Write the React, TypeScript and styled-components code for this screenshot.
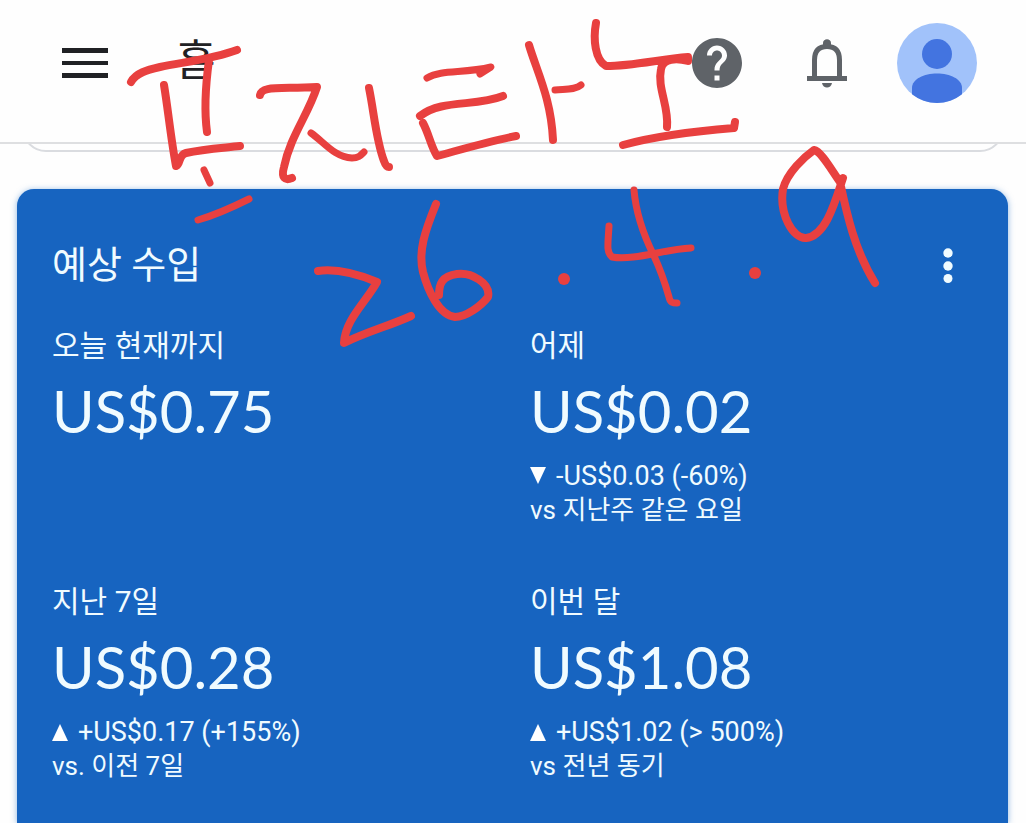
import React from 'react';
import styled, { createGlobalStyle } from 'styled-components';

const GlobalStyle = createGlobalStyle`
  * { box-sizing: border-box; }
  body {
    margin: 0;
    background: #fefefe;
    font-family: Roboto, "Noto Sans CJK KR", sans-serif;
    overflow-x: hidden;
  }
  h1, h2, h3, p { margin: 0; font-weight: 400; }
`;

const Page = styled.div`
  position: relative;
  min-height: 100vh;
  display: flex;
  flex-direction: column;
`;

const TopBar = styled.header`
  display: flex;
  align-items: center;
  padding: 0 34px 16px 30px;
  height: 144px;
  border-bottom: 2px solid #dedfe1;
`;

const IconButton = styled.button`
  display: flex;
  align-items: center;
  justify-content: center;
  width: 110px;
  height: 110px;
  padding: 0;
  border: 0;
  background: none;
  cursor: pointer;
`;

const PageTitle = styled.h1`
  flex: 1;
  padding: 0 0 4px 36px;
  font-size: 43px;
  line-height: 50px;
  color: #202124;
`;

const PanelTail = styled.div`
  display: flex;
  align-items: flex-end;
  height: 8px;
  margin: 0 22px;
  overflow: hidden;
`;

const PanelEdge = styled.div`
  flex: 1;
  height: 60px;
  border: 2px solid #dadce0;
  border-radius: 24px;
`;

const Card = styled.main`
  flex: 1;
  margin: 37px 18px 0 17px;
  padding: 51px 0 38px 35px;
  border-radius: 17px 17px 0 0;
  background: #1764c0;
  box-shadow: 0 1px 6px rgba(30, 110, 200, 0.5);
  color: #f0fbff;
`;

const CardHead = styled.div`
  display: flex;
  align-items: center;
  justify-content: space-between;
  height: 50px;
  margin-bottom: 36px;
  padding-right: 40px;
`;

const CardTitle = styled.h2`
  font-size: 38px;
  line-height: 50px;
`;

const MoreButton = styled(IconButton)`
  width: 40px;
  height: 50px;
`;

const Metrics = styled.div`
  display: grid;
  grid-template-columns: 1fr 1fr;
  row-gap: 55px;
`;

const Label = styled.h3`
  font-size: 30px;
  line-height: 40px;
`;

const Amount = styled.p`
  margin: 9px 0 12px;
  font-family: Lato, sans-serif;
  font-size: 58px;
  line-height: 72px;
`;

const Detail = styled.p`
  display: flex;
  align-items: center;
  gap: 10px;
  font-size: 26px;
  line-height: 34px;
`;

const Change = styled(Detail)`
  font-size: 27px;
`;

const Ink = styled.svg`
  position: absolute;
  top: 0;
  left: 0;
  pointer-events: none;
`;

type MetricData = {
  label: string;
  amount: string;
  trend?: 'up' | 'down';
  change?: string;
  versus?: string;
};

const metrics: MetricData[] = [
  { label: '오늘 현재까지', amount: 'US$0.75' },
  { label: '어제', amount: 'US$0.02', trend: 'down', change: '-US$0.03 (-60%)', versus: 'vs 지난주 같은 요일' },
  { label: '지난 7일', amount: 'US$0.28', trend: 'up', change: '+US$0.17 (+155%)', versus: 'vs. 이전 7일' },
  { label: '이번 달', amount: 'US$1.08', trend: 'up', change: '+US$1.02 (> 500%)', versus: 'vs 전년 동기' },
];

const Metric = ({ label, amount, trend, change, versus }: MetricData) => (
  <section>
    <Label>{label}</Label>
    <Amount>{amount}</Amount>
    {trend && (
      <Change>
        <svg width="16" height="18" viewBox="0 0 16 18" fill="#fff" aria-hidden="true">
          <path d={trend === 'up' ? 'M8 1 16 18H0Z' : 'M0 0H16L8 17Z'} />
        </svg>
        {change}
      </Change>
    )}
    {versus && <Detail>{versus}</Detail>}
  </section>
);

// Handwritten strokes: [path, pen width]
const strokes: [string, number][] = [
  // first row
  ['M131 82C136 73 147 70 160 67C184 62 213 59 237 50', 8],
  ['M164 85C168 109 171 140 176 166C181 164 178 155 186 153C203 149 222 148 240 146', 8],
  ['M209 60C206 82 204 110 207 132', 8],
  ['M204 170 210 183', 7],
  ['M198 220C215 215 233 207 249 199', 7],
  ['M260 95C262 86 276 89 317 87C308 115 290 137 284 167C281 178 285 181 292 178', 8],
  ['M311 133C324 142 334 157 352 158C359 158 361 155 364 152', 7],
  ['M369 88C374 112 376 140 384 161Q386 167 389 167', 8],
  ['M427 78C442 69 463 74 491 67L480 74', 7],
  ['M420 116C442 99 475 107 503 96', 8],
  ['M423 123C429 134 431 147 437 156C463 149 490 141 516 136', 8],
  ['M529 45C537 72 551 98 553 140', 8],
  ['M555 90C567 89 575 90 581 85', 7],
  ['M596 23C593 39 595 60 606 66C633 66 661 59 688 57L688 61C677 58 663 58 661 69C657 88 669 106 667 127', 8],
  ['M623 145C652 137 697 131 734 128L735 122', 8],
  // second row
  ['M318 271C339 268 360 275 377 282C366 302 345 320 344 343C366 332 389 326 411 316', 8],
  ['M436 204C425 231 418 251 423 272C428 291 439 315 455 317C466 317 481 306 488 297C491 283 471 272 457 274C442 276 439 284 439 295', 8],
  ['M609 226C608 244 606 252 612 257C634 261 665 249 691 248', 7],
  ['M634 190C636 214 645 238 654 256C661 271 665 283 669 297C670 303 673 303 677 303', 7],
  ['M843 178C835 202 826 236 806 238C793 239 779 214 783 189C787 173 804 157 814 150C821 151 832 171 840 182C847 215 855 251 875 283', 8],
];

const Handwriting = () => (
  <Ink width="1026" height="380" viewBox="0 0 1026 380" fill="none" stroke="#e8403f" strokeLinecap="round" strokeLinejoin="round" aria-hidden="true">
    {strokes.map(([d, width]) => (
      <path key={d} d={d} strokeWidth={width} />
    ))}
    <g fill="#e8403f" stroke="none">
      <circle cx="564" cy="279" r="6" />
      <circle cx="755" cy="273" r="6" />
    </g>
  </Ink>
);

export default function App() {
  return (
    <Page>
      <GlobalStyle />
      <TopBar>
        <IconButton aria-label="메뉴">
          <svg width="46" height="32" viewBox="0 0 46 32" fill="#202124">
            <path d="M0 1H46V6H0ZM0 14H46V18H0ZM0 26H46V31H0Z" />
          </svg>
        </IconButton>
        <PageTitle>홈</PageTitle>
        <IconButton aria-label="도움말">
          <svg width="50" height="50" viewBox="2 2 20 20" fill="#5f6368">
            <path d="M12 2C6.48 2 2 6.48 2 12s4.48 10 10 10 10-4.48 10-10S17.52 2 12 2zm1 17h-2v-2h2v2zm2.07-7.75-.9.92C13.45 12.9 13 13.5 13 15h-2v-.5c0-1.1.45-2.1 1.17-2.83l1.24-1.26c.37-.36.59-.86.59-1.41 0-1.1-.9-2-2-2s-2 .9-2 2H8c0-2.21 1.79-4 4-4s4 1.79 4 4c0 .88-.36 1.68-.93 2.25z" />
          </svg>
        </IconButton>
        <IconButton aria-label="알림">
          <svg width="42" height="50" viewBox="0 0 42 50" fill="none">
            <path d="M8.500 38V22C8.500 13 13 8.500 21 8.500S33.500 13 33.500 22V38" stroke="#5f6368" strokeWidth="5" />
            <path d="M17 10V5C17 0 25 0 25 5V10ZM1 38H41V43H1ZM16 45H26C25 51 17 51 16 45Z" fill="#5f6368" />
          </svg>
        </IconButton>
        <IconButton aria-label="계정">
          <svg width="80" height="80" viewBox="0 0 80 80">
            <circle cx="40" cy="40" r="40" fill="#a1c2fa" />
            <circle cx="40" cy="31" r="15" fill="#4374e0" />
            <path d="M15 71.200V65C15 56 27 50.500 40 50.500S65 56 65 65V71.200A40 40 0 0 1 15 71.200Z" fill="#4374e0" />
          </svg>
        </IconButton>
      </TopBar>
      <PanelTail>
        <PanelEdge />
      </PanelTail>
      <Card>
        <CardHead>
          <CardTitle>예상 수입</CardTitle>
          <MoreButton aria-label="더보기">
            <svg width="10" height="36" viewBox="0 0 10 36" fill="#f0fbff">
              <circle cx="5" cy="6" r="4.700" />
              <circle cx="5" cy="19" r="4.700" />
              <circle cx="5" cy="31.500" r="4.500" />
            </svg>
          </MoreButton>
        </CardHead>
        <Metrics>
          {metrics.map((m) => (
            <Metric key={m.label} {...m} />
          ))}
        </Metrics>
      </Card>
      <Handwriting />
    </Page>
  );
}
